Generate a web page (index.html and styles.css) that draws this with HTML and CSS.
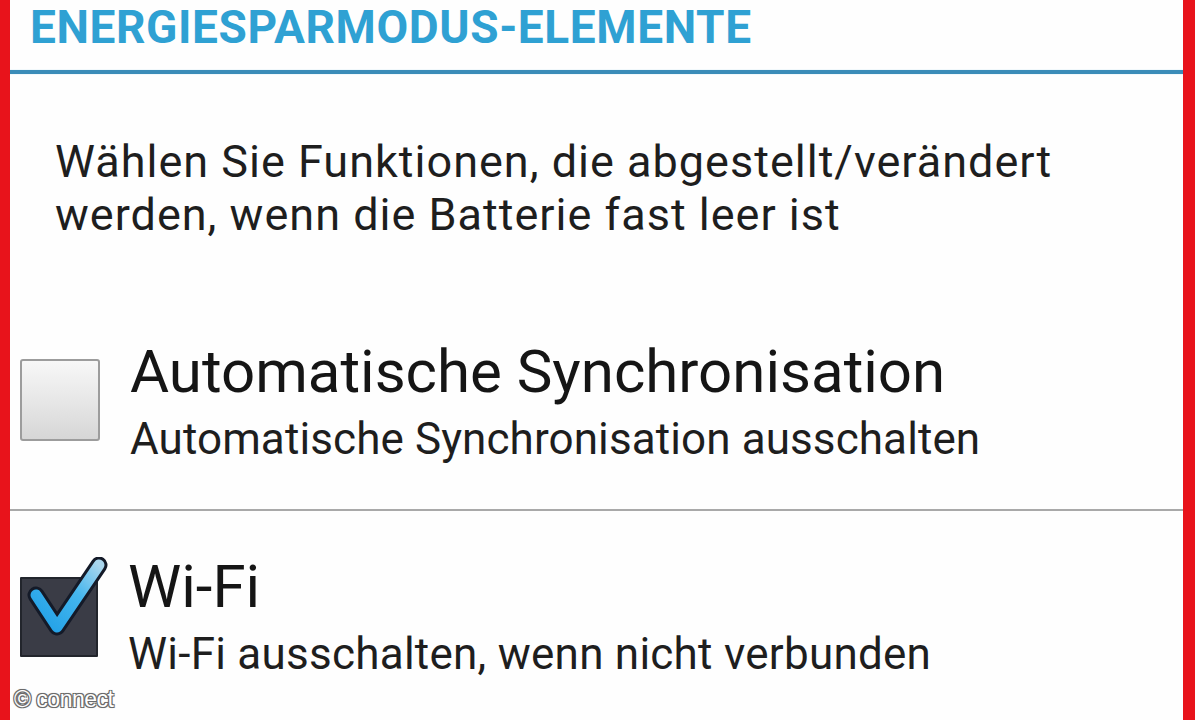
FILE: index.html
```html
<!DOCTYPE html>
<html lang="de">
<head>
<meta charset="utf-8">
<title>Energiesparmodus-Elemente</title>
<link rel="stylesheet" href="styles.css">
</head>
<body>
<div class="frame">
  <header class="section-head">
    <h1 class="section-title">ENERGIESPARMODUS-ELEMENTE</h1>
  </header>
  <div class="rule-blue"></div>
  <p class="desc">Wählen Sie Funktionen, die abgestellt/verändert<br>werden, wenn die Batterie fast leer ist</p>
  <ul class="list">
    <li class="item">
      <span class="cb cb-off"></span>
      <div class="item-text">
        <div class="item-title">Automatische Synchronisation</div>
        <div class="item-sub">Automatische Synchronisation ausschalten</div>
      </div>
    </li>
    <li class="item item-divided">
      <span class="cb cb-on">
        <svg class="tick" viewBox="0 0 100 100" width="100" height="100" aria-hidden="true">
          <defs>
            <linearGradient id="tg" x1="0" y1="1" x2="1" y2="0">
              <stop offset="0" stop-color="#1f9fe6"/>
              <stop offset="0.6" stop-color="#45b6ee"/>
              <stop offset="1" stop-color="#a9d6ee"/>
            </linearGradient>
          </defs>
          <path d="M21 38 L42 70 L84 8" fill="none" stroke="#141a28" stroke-width="17" stroke-linecap="round" stroke-linejoin="round"/>
          <path d="M21 38 L42 70 L84 8" fill="none" stroke="url(#tg)" stroke-width="11" stroke-linecap="round" stroke-linejoin="round"/>
        </svg>
      </span>
      <div class="item-text">
        <div class="item-title">Wi-Fi</div>
        <div class="item-sub sub-wide">Wi-Fi ausschalten, wenn nicht verbunden</div>
      </div>
    </li>
  </ul>
  <div class="watermark">© connect</div>
</div>
</body>
</html>
```

FILE: styles.css
```css
html, body {
  margin: 0;
  padding: 0;
  background: #ffffff;
}

body {
  width: 1200px;
  height: 720px;
  overflow: hidden;
  font-family: Roboto, "Noto Sans", "Liberation Sans", sans-serif;
  color: #1c1c1c;
}

.frame {
  position: relative;
  box-sizing: border-box;
  width: 1195px;
  height: 720px;
  overflow: hidden;
  border-left: 10px solid #e8131b;
  border-right: 12px solid #e8131b;
  background: #fefefe;
  display: flex;
  flex-direction: column;
}

.frame > * {
  flex: none;
}

.section-head {
  height: 70px;
  box-sizing: border-box;
  padding: 0 0 0 20px;
}

.section-title {
  margin: 0;
  font-size: 46px;
  line-height: 54px;
  font-weight: 700;
  color: #2fa1d3;
  letter-spacing: 0.6px;
}

.rule-blue {
  height: 4px;
  background: #3b8cb8;
  box-shadow: 0 0 1px #7fbcdc;
}

.desc {
  margin: 61px 0 0 0;
  padding-left: 45px;
  font-size: 45px;
  line-height: 53px;
  letter-spacing: 1px;
  color: #1e1e1e;
}

.list {
  list-style: none;
  margin: 56px 0 0 0;
  padding: 0;
}

.item {
  display: flex;
  align-items: center;
  gap: 30px;
  padding: 45px 0 45px 10px;
}

.item-divided {
  border-top: 2px solid #a9a9a9;
  padding-top: 46px;
}

.item-text {
  display: flex;
  flex-direction: column;
  gap: 12px;
}

.item-title {
  font-size: 60px;
  line-height: 60px;
  color: #151515;
}

.item-sub {
  font-size: 44px;
  line-height: 50px;
  letter-spacing: 0.1px;
  color: #1e1e1e;
}

.sub-wide {
  letter-spacing: 0.25px;
}

.cb {
  position: relative;
  flex: none;
  box-sizing: border-box;
  border-radius: 3px;
}

.cb-off {
  width: 80px;
  height: 82px;
  border: 2px solid #9c9c9c;
  background: linear-gradient(180deg, #f7f7f7 0%, #e4e4e4 60%, #d6d6d6 100%);
  margin-top: -6px;
}

.cb-on {
  width: 78px;
  height: 80px;
  border: 2px solid #22252c;
  background: #3a3c46;
  border-radius: 1px;
  margin-top: -2px;
}

.tick {
  position: absolute;
  left: -7px;
  top: -22px;
  width: 100px;
  height: 100px;
}

.watermark {
  position: absolute;
  left: 4px;
  top: 685px;
  font-family: "Liberation Sans", Arial, sans-serif;
  font-size: 23px;
  line-height: 28px;
  color: #ffffff;
  letter-spacing: -0.5px;
  text-shadow: -1px -1px 0 #6a6a6a, 1px -1px 0 #6a6a6a, -1px 1px 0 #6a6a6a, 1px 1px 0 #6a6a6a, 0 0 2px #555;
}
```
